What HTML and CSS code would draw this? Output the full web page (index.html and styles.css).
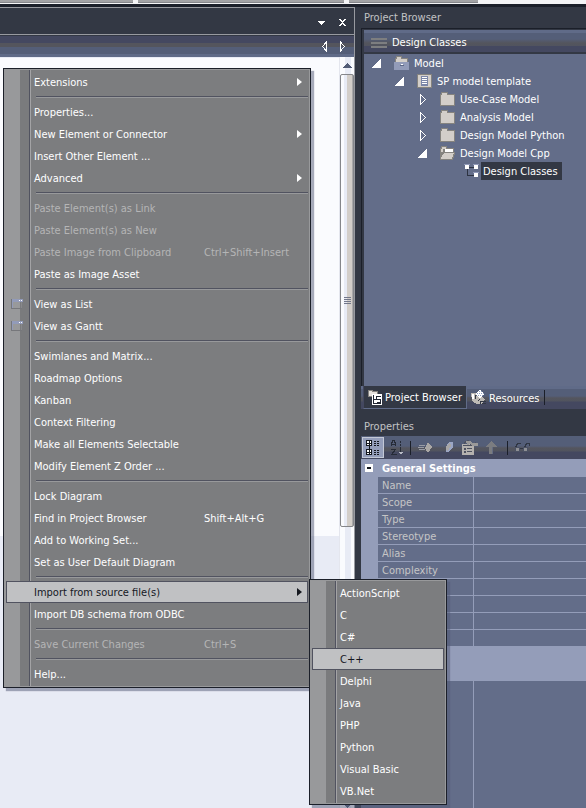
FILE: index.html
```html
<!DOCTYPE html>
<html lang="en">
<head>
<meta charset="utf-8">
<title>Design Classes</title>
<link rel="stylesheet" href="styles.css">
</head>
<body>
<svg class="defs" aria-hidden="true">
  <symbol id="open" viewBox="0 0 9 11"><path fill="#fff" d="M8 1h1v9H0V9h1V8h1V7h1V6h1V5h1V4h1V3h1V2h1z"/></symbol>
  <symbol id="closed" viewBox="0 0 9 11"><path fill="none" stroke="#fff" d="M2.500 .5v10L7.500 5.500z"/></symbol>
  <symbol id="folder" viewBox="0 0 15 14"><path fill="#85837f" d="M1 0h7v2h7v12H0V2h1z"/><path fill="#d3cec9" d="M2 1h5v2h7v10H1V3h1z"/></symbol>
  <symbol id="window" viewBox="0 0 12 10"><path fill="#76777b" d="M0 0h1v9h10v1H0z"/><path fill="#929bb9" d="M1 0h11v3H2v6H1z"/><path fill="#fff" d="M8 1h1v1H8zM10 1h1v1h-1z"/><path fill="#88898c" d="M10 3h1v6h-1z"/></symbol>
</svg>
<div class="strip"><span class="strip-tab first"></span><span class="strip-tab second"></span><span class="strip-tab third"></span></div>
<div class="app">
  <main class="editor">
    <div class="editor-title">
      <button class="glyph" aria-label="Window list"><svg width="9" height="9"><path fill="#fff" d="M1 3h7v1H7v1H6v1H5v1H4V6H3V5H2V4H1z"/></svg></button>
      <button class="glyph" aria-label="Close"><svg width="9" height="9"><path fill="#fff" d="M1 1h2v1h1v1h1V2h1V1h2v1H7v1H6v1H5v1h1v1h1v1h1v1H6V7H5V6H4v1H3v1H1V7h1V6h1V5h1V4H3V3H2V2H1z"/></svg></button>
    </div>
    <div class="editor-bar">
      <button class="glyph" aria-label="Scroll left"><svg width="7" height="11"><path fill="none" stroke="#fff" d="M5.500 1v9L1.500 5.500z"/></svg></button>
      <button class="glyph" aria-label="Scroll right"><svg width="7" height="11"><path fill="none" stroke="#fff" d="M1.500 1v9L5.500 5.500z"/></svg></button>
    </div>
    <div class="workspace">
      <div class="canvas"><div class="page"></div></div>
      <div class="scrollbar">
        <svg class="up" width="9" height="5"><path fill="#525c76" d="M4 0h1v1h1v1h1v1h1v1h1v1H0V4h1V3h1V2h1V1h1z"/></svg>
        <div class="thumb"><svg width="7" height="8"><path stroke="#73788b" d="M0 .5h7M0 2.500h7M0 4.500h7M0 6.500h7"/></svg></div>
        <div class="track"></div>
        <svg class="down" width="9" height="5"><path fill="#525c76" d="M0 0h9L5 5H4z"/></svg>
      </div>
    </div>
  </main>

  <aside class="side">
    <h2 class="side-title">Project Browser</h2>
    <section class="browser">
      <div class="browser-head"><svg width="16" height="10"><path stroke="#7d7e80" stroke-width="2" d="M0 1h16M0 5h16M0 9h16"/></svg>Design Classes</div>
      <ul class="tree">
        <li class="node l0"><svg class="arrow"><use href="#open" width="9" height="11"/></svg><svg class="ico" width="15" height="14"><path fill="#85837f" d="M2 0h6v2h6v5H1V2h1z"/><path fill="#d3cec9" d="M3 1h4v2h6v4H2V3h1z"/><path fill="#929bb9" d="M0 6h15v8H0z"/><path fill="#fff" d="M7 8h2v1H7z"/><path fill="#5d6886" d="M6 9h4v1H6z"/></svg><span>Model</span></li>
        <li class="node l1"><svg class="arrow"><use href="#open" width="9" height="11"/></svg><svg class="ico" width="15" height="14"><path fill="#85837f" d="M0 0h15v14H0z"/><path fill="#d3cec9" d="M1 1h13v12H1z"/><path fill="#7b86a8" d="M4 2h7v10H4z"/><path stroke="#fff" d="M5 3.500h5M5 5.500h5M5 7.500h5M5 9.500h5"/></svg><span>SP model template</span></li>
        <li class="node l2"><svg class="arrow"><use href="#closed" width="9" height="11"/></svg><svg class="ico" width="15" height="14"><use href="#folder"/></svg><span>Use-Case Model</span></li>
        <li class="node l2"><svg class="arrow"><use href="#closed" width="9" height="11"/></svg><svg class="ico" width="15" height="14"><use href="#folder"/></svg><span>Analysis Model</span></li>
        <li class="node l2"><svg class="arrow"><use href="#closed" width="9" height="11"/></svg><svg class="ico" width="15" height="14"><use href="#folder"/></svg><span>Design Model Python</span></li>
        <li class="node l2"><svg class="arrow"><use href="#open" width="9" height="11"/></svg><svg class="ico" width="15" height="14"><path fill="#85837f" d="M1 0h6v2h7v4h1v3h-1v3h-1v2H0V2h1z"/><path fill="#d3cec9" d="M2 1h4v2H2zM1 3h2v3H1z"/><path fill="#fff" d="M5 3h8v3H5z"/><path fill="#d3cec9" d="M4 7h10v1h-1v3h-1v2H1v-2h1V9h1V8h1z"/></svg><span>Design Model Cpp</span></li>
        <li class="node l3"><svg class="arrow"></svg><svg class="ico" width="15" height="14"><path fill="none" stroke="#2d3341" d="M3.500 5v6.500H10M5 3.500h5"/><path fill="#929bb9" d="M0 0h6v1H0zM9 0h6v1H9zM9 8h6v1H9z"/><path fill="#fff" d="M1 1h4v4H1zM10 1h4v4h-4zM10 9h4v4h-4z"/></svg><span class="selected">Design Classes</span></li>
      </ul>
    </section>
    <nav class="tabs">
      <button class="tab active"><svg width="14" height="15"><path fill="#85837f" d="M0 0h5v1h5v6H0z"/><path fill="#e5e1dc" d="M1 1h3v1h5v4H1z"/><path fill="#fff" d="M4 4h10v11H4z"/><path fill="none" stroke="#222733" d="M5.500 5v8.500H13M12.500 6.500h-4v3h4v3h-4M6 9.500h2"/></svg>Project Browser</button>
      <button class="tab"><svg width="15" height="15"><path fill="#bdb9b5" d="M0 3h5v3l3-2 6 5-3 5H6L1 11z"/><path fill="#fff" d="M9 0l5 4-5 4-5-4zM1 4h2v5H1z"/><path stroke="#8fa0c4" stroke-dasharray="1 1" d="M6 3.500h7M7 5.500h5M8 1.500h3"/><path fill="none" stroke="#333844" d="M4.500 5v4M9.500 14v-3h5M11 13.500h4M7 11l2-2"/></svg>Resources</button>
      <span class="tab-end"></span>
    </nav>
    <h2 class="side-title props-title">Properties</h2>
    <div class="toolbar">
      <button class="tool on" aria-label="Categorized"><svg width="16" height="17"><path fill="#fff" d="M1 1h6v6H1zM1 10h6v6H1z"/><path fill="none" stroke="#15181f" d="M1.500 1.500h5v5h-5zM2 4h4M4 2v4M1.500 10.500h5v5h-5zM2 13h4M4 11v4M9 2.500h2m1 0h2M9 4.500h2m1 0h2M9 6.500h2m1 0h2M9 11.500h2m1 0h2M9 13.500h2m1 0h2M9 15.500h2m1 0h2M4.500 7v3"/></svg></button>
      <button class="tool" aria-label="Sort alphabetically"><svg width="12" height="16"><path fill="none" stroke="#262b37" d="M.5 6V2h1V.5h2V2h1v4M1 4.500h4M0 9.500h4.500L.5 14.500h5M9.500 1v2m0 1v2m0 1v5"/><path fill="#b9bcc6" d="M7 12h5l-2 3z"/></svg></button>
      <span class="rule"></span>
      <button class="tool" aria-label="Previous"><svg width="18" height="13"><path stroke="#999ca5" d="M1 4.500h6M0 6.500h6M1 8.500h6"/><path fill="#aaa7a5" d="M10 1l4 5-4 6-3-5z"/></svg></button>
      <button class="tool" aria-label="Next"><svg width="12" height="11"><path fill="#9ba6c5" d="M6 0h4v5l-4 5H3V5z"/><path fill="#a8a6a6" d="M3 5l4-5 1 4-4 6z"/></svg></button>
      <button class="tool" aria-label="Property pages"><svg width="16" height="15"><path fill="#b5b2af" d="M0 4h12v11H0z"/><path fill="#4e5260" d="M1 5h10v1H1zM2 8h2v2H2zM2 11h2v2H2zM5 8h5v1H5zM5 11h5v1H5z"/><path fill="none" stroke="#4e5260" stroke-width="2" d="M2 3l4-2 4 4 4-2"/><path fill="#9a9999" d="M4 1h4l3 2h5v3h-5L8 4 5 5z"/></svg></button>
      <button class="tool" aria-label="Up"><svg width="15" height="13"><path fill="#7b7c80" d="M6 0l6 6H8v7H4V6H0z"/><path stroke="#656d83" d="M7.500 6v7"/></svg></button>
      <span class="rule"></span>
      <button class="tool" aria-label="Find"><svg width="16" height="11"><path fill="none" stroke="#303643" d="M.5 6V4.500h1v-2h1v-1h3M9.500 6V4.500h1v-2h1v-1h3v2M5 6.500h4"/><path fill="#8e8f94" stroke="#4b5164" d="M.5 5.500h4v4h-4zM8.500 5.500h4v4h-4z"/></svg></button>
    </div>
    <div class="props">
      <table class="grid">
        <colgroup><col class="c-gutter"><col class="c-name"><col></colgroup>
        <thead><tr><th class="gutter"><button class="fold" aria-label="Collapse"><svg width="8" height="8"><path fill="#fff" d="M0 0h8v8H0z"/><path fill="#15181f" d="M2 3h4v2H2z"/></svg></button></th><th class="group" colspan="2" scope="colgroup">General Settings</th></tr></thead>
        <tbody>
        <tr><td class="gutter"></td><th scope="row">Name</th><td></td></tr>
        <tr><td class="gutter"></td><th scope="row">Scope</th><td></td></tr>
        <tr><td class="gutter"></td><th scope="row">Type</th><td></td></tr>
        <tr><td class="gutter"></td><th scope="row">Stereotype</th><td></td></tr>
        <tr><td class="gutter"></td><th scope="row">Alias</th><td></td></tr>
        <tr><td class="gutter"></td><th scope="row">Complexity</th><td></td></tr>
        <tr><td class="gutter"></td><td></td><td></td></tr>
        <tr><td class="gutter"></td><td></td><td></td></tr>
        <tr><td class="gutter"></td><td></td><td></td></tr>
        <tr><td class="gutter"></td><td></td><td></td></tr>
        </tbody>
      </table>
      <div class="band"></div>
      <div class="rest"><span></span></div>
    </div>
  </aside>
</div>

<ul class="menu main">
  <li><button>Extensions<i class="more"></i></button></li>
  <li class="sep"></li>
  <li><button>Properties...</button></li>
  <li><button>New Element or Connector<i class="more"></i></button></li>
  <li><button>Insert Other Element ...</button></li>
  <li><button>Advanced<i class="more"></i></button></li>
  <li class="sep"></li>
  <li><button disabled>Paste Element(s) as Link</button></li>
  <li><button disabled>Paste Element(s) as New</button></li>
  <li><button disabled><span class="name">Paste Image from Clipboard</span><span>Ctrl+Shift+Insert</span></button></li>
  <li><button>Paste as Image Asset</button></li>
  <li class="sep"></li>
  <li><button><svg class="mark" width="12" height="10"><use href="#window" width="12" height="10"/></svg>View as List</button></li>
  <li><button><svg class="mark" width="12" height="10"><use href="#window" width="12" height="10"/></svg>View as Gantt</button></li>
  <li class="sep"></li>
  <li><button>Swimlanes and Matrix...</button></li>
  <li><button>Roadmap Options</button></li>
  <li><button>Kanban</button></li>
  <li><button>Context Filtering</button></li>
  <li><button>Make all Elements Selectable</button></li>
  <li><button>Modify Element Z Order ...</button></li>
  <li class="sep"></li>
  <li><button>Lock Diagram</button></li>
  <li><button><span class="name">Find in Project Browser</span><span>Shift+Alt+G</span></button></li>
  <li><button>Add to Working Set...</button></li>
  <li><button>Set as User Default Diagram</button></li>
  <li class="sep"></li>
  <li><button class="hot">Import from source file(s)<i class="more"></i></button></li>
  <li><button>Import DB schema from ODBC</button></li>
  <li class="sep"></li>
  <li><button disabled><span class="name">Save Current Changes</span><span>Ctrl+S</span></button></li>
  <li class="sep"></li>
  <li><button>Help...</button></li>
</ul>
<ul class="menu sub">
  <li><button>ActionScript</button></li>
  <li><button>C</button></li>
  <li><button>C#</button></li>
  <li><button class="hot">C++</button></li>
  <li><button>Delphi</button></li>
  <li><button>Java</button></li>
  <li><button>PHP</button></li>
  <li><button>Python</button></li>
  <li><button>Visual Basic</button></li>
  <li><button>VB.Net</button></li>
</ul>
</body>
</html>
```
FILE: styles.css
```css
*, *::before { box-sizing: border-box; }
body {
  margin: 0;
  min-height: 100vh;
  display: flex;
  flex-direction: column;
  position: relative;
  overflow: hidden;
  background: #333844;
  color: #fff;
  font: 11px/16px Tahoma, "DejaVu Sans Condensed", sans-serif;
}
ul { list-style: none; margin: 0; padding: 0; }
button { font: inherit; color: inherit; background: none; border: 0; padding: 0; margin: 0; text-align: left; }
svg { display: block; flex: none; shape-rendering: crispEdges; }
.defs { position: absolute; width: 0; height: 0; }

.strip { display: flex; gap: 5px; height: 7px; background: #f4f4f6; border-bottom: 3px solid #1b1f29; }
.strip-tab { height: 3px; background: #a3a3a5; border-bottom: 1px solid #85868a; }
.first { width: 133px; }
.second { width: 206px; }
.third { width: 129px; }

.app { flex: 1; display: grid; grid-template-columns: minmax(0, 355fr) minmax(0, 225fr); column-gap: 6px; }
.editor { display: flex; flex-direction: column; border-right: 1px solid #989aa0; border-top: 1px solid #989aa0; }
.editor-title { height: 27px; display: flex; justify-content: flex-end; align-items: center; gap: 12px; padding: 2px 7px 0 0; border-bottom: 1px solid #989aa0; }
.editor-bar { height: 22px; display: flex; justify-content: flex-end; align-items: center; gap: 11px; padding-right: 8px; background: linear-gradient(#333844 1px, #444860 1px 8px, #54555d 8px 12px, #545e78 12px 19px, #606b88 19px); }
.workspace { flex: 1; display: flex; }
.canvas { flex: 1; background: #e8ebf5; }
.page { height: 479px; background: #fafbfe; border-top: 1px solid #e8ebf5; }
.scrollbar { width: 15px; display: flex; flex-direction: column; align-items: center; border-left: 1px solid #e4e6ee; background: linear-gradient(90deg, #fafbfe 5px, #e8ebf5 5px 11px, #fafbfe 11px); }
.up { margin: 6px 0; }
.thumb { align-self: stretch; flex: 453; display: flex; align-items: center; justify-content: center; border: 1px solid #85868a; border-radius: 2px; background: linear-gradient(90deg, #fafbfe 3px, #e8ebf5 3px 6px, #d3cec9 6px 11px, #aaa9aa 11px); }
.track { flex: 277; }

.side { display: flex; flex-direction: column; min-width: 0; }
.side-title { margin: 0; padding: 3px 3px 0; height: 21px; font-size: 11px; font-weight: 400; line-height: 16px; color: #c2c3c5; }
.browser { height: 358px; border-top: 1px solid #1b1f29; border-left: 1px solid #1b1f29; padding: 1px 0 0 2px; }
.browser-head { height: 24px; display: flex; align-items: center; gap: 5px; padding: 4px 0 0 7px; border-bottom: 2px solid #333844; background: linear-gradient(#606b88 3px, #545e78 3px 9px, #54555d 13px, #51545f 16px, #444860 16px); }
.tree { height: 332px; background: #636d89; }
.node { height: 18px; display: flex; align-items: center; }
.node span { padding-top: 2px; white-space: nowrap; }
.arrow { width: 9px; height: 11px; margin-right: 13px; }
.ico { margin-right: 5px; }
.l0 { padding-left: 8px; }
.l1 { padding-left: 31px; }
.l2 { padding-left: 54px; }
.l3 { padding-left: 78px; }
.node .selected { background: #333844; padding: 2px 4px 0 2px; margin-left: -3px; }

.tabs { display: flex; height: 23px; padding-left: 2px; background: linear-gradient(#606b88 3px, #545e78 3px 10px, #54555d 12px, #51545f 15px, #444860 16px); }
.tab { display: flex; align-items: center; gap: 3px; padding: 2px 4px 0 4px; white-space: nowrap; }
.tab svg { margin-bottom: 2px; }
.tab.active { background: #333844; border: 1px solid #606b88; border-top: 0; border-left-color: #444860; }
.tab-end { width: 1px; height: 15px; margin-top: 4px; background: #1b1f29; }
.props-title { padding-top: 10px; height: 27px; }
.toolbar { height: 23px; display: flex; align-items: center; gap: 7px; padding: 0 1px; background: linear-gradient(#545e78 10px, #54555d 12px, #51545f 15px, #444860 16px); }
.tool.on { background: #949db9; border: 1px solid #c3c8d6; padding: 1px 2px; }
.rule { width: 1px; height: 14px; background: #1b1f29; }

.props { flex: 1; display: flex; flex-direction: column; background: #949db9; }
.grid { width: 100%; border-collapse: separate; border-spacing: 0; table-layout: fixed; color: #c5c5c6; }
.c-gutter { width: 17px; }
.c-name { width: 96px; }
.grid th, .grid td { padding: 2px 0 0; height: 17px; line-height: 14px; font-weight: 400; text-align: left; }
.grid tbody th, .grid tbody td { background: #636d89; padding-left: 4px; border-bottom: 1px solid #949db9; border-right: 1px solid #949db9; }
.grid tbody td:last-child { border-right: 0; }
.grid .gutter, .grid tbody .gutter { background: #949db9; padding: 0 0 0 4px; border-right: 0; }
.grid thead th { height: 18px; }
.grid thead .group { padding-left: 4px; color: #fff; font-weight: 700; }
.fold { display: block; }
.band { height: 34px; }
.rest { flex: 1; background: #636d89; padding-left: 112px; display: flex; }
.rest span { width: 1px; background: #949db9; }

.menu { position: absolute; padding: 2px; border: 1px solid #1b1f29; color: #fff; background: linear-gradient(90deg, #98999b 16px, #7a7b7d 16px 25px, #515360 25px 26px, #a3a3a5 26px 27px, #7c7d7f 27px); box-shadow: inset -1px -1px #98999b, inset 0 1px #98999b, 3px 3px 1px #515a7580; }
.main { left: 3px; top: 68px; width: 308px; }
.sub { left: 309px; top: 579px; width: 138px; }
.menu button { width: 100%; height: 22px; display: flex; align-items: center; padding: 2px 8px 0 28px; white-space: nowrap; position: relative; }
.menu button:disabled { color: #b5b5b6; }
.menu .hot { background: #c0c1c3; color: #15181f; outline: 1px solid #515360; outline-offset: -1px; }
.sep { height: 8px; padding: 3px 0 0 30px; }
.sep::before { content: ""; display: block; height: 2px; background: #515360; border-bottom: 1px solid #98999b; }
.more { margin: 0 -2px 2px auto; border: 4px solid transparent; border-left: 5px solid currentColor; border-right: 0; }
.name { width: 170px; }
.mark { position: absolute; left: 5px; top: 6px; }
```
